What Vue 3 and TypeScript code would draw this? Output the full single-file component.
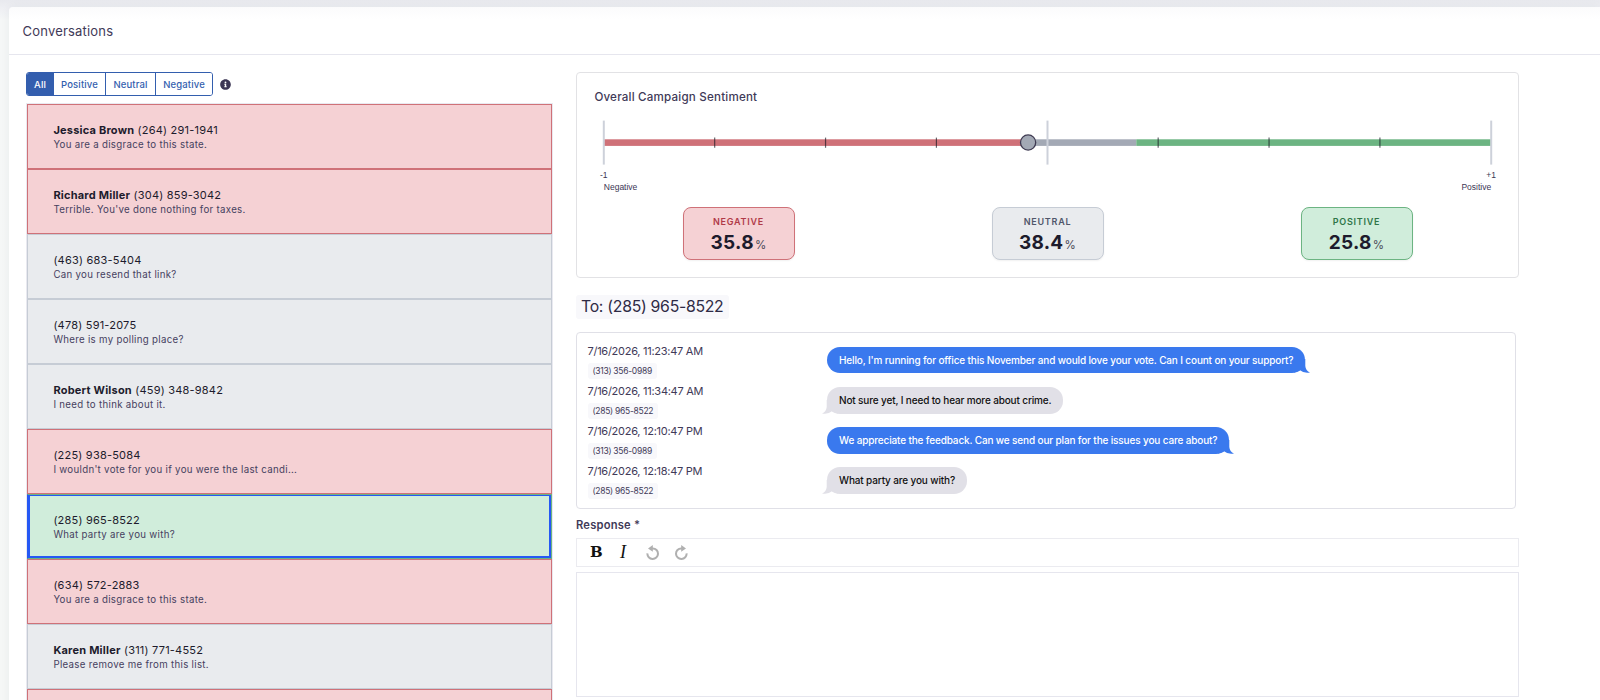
<script setup lang="ts">
type Tone = 'negative' | 'neutral' | 'positive'

interface Conversation {
  name?: string
  phone: string
  preview: string
  tone: Tone
  selected?: boolean
}

interface Message {
  time: string
  from: string
  text: string
  outgoing: boolean
}

const filters = ['All', 'Positive', 'Neutral', 'Negative']

const conversations: Conversation[] = [
  { name: 'Jessica Brown', phone: '(264) 291-1941', preview: 'You are a disgrace to this state.', tone: 'negative' },
  { name: 'Richard Miller', phone: '(304) 859-3042', preview: "Terrible. You've done nothing for taxes.", tone: 'negative' },
  { phone: '(463) 683-5404', preview: 'Can you resend that link?', tone: 'neutral' },
  { phone: '(478) 591-2075', preview: 'Where is my polling place?', tone: 'neutral' },
  { name: 'Robert Wilson', phone: '(459) 348-9842', preview: 'I need to think about it.', tone: 'neutral' },
  { phone: '(225) 938-5084', preview: "I wouldn't vote for you if you were the last candi...", tone: 'negative' },
  { phone: '(285) 965-8522', preview: 'What party are you with?', tone: 'positive', selected: true },
  { phone: '(634) 572-2883', preview: 'You are a disgrace to this state.', tone: 'negative' },
  { name: 'Karen Miller', phone: '(311) 771-4552', preview: 'Please remove me from this list.', tone: 'neutral' },
  { phone: '', preview: '', tone: 'negative' },
]

const scores: { tone: Tone; value: string }[] = [
  { tone: 'negative', value: '35.8' },
  { tone: 'neutral', value: '38.4' },
  { tone: 'positive', value: '25.8' },
]

const messages: Message[] = [
  { time: '7/16/2026, 11:23:47 AM', from: '(313) 356-0989', text: "Hello, I'm running for office this November and would love your vote. Can I count on your support?", outgoing: true },
  { time: '7/16/2026, 11:34:47 AM', from: '(285) 965-8522', text: 'Not sure yet, I need to hear more about crime.', outgoing: false },
  { time: '7/16/2026, 12:10:47 PM', from: '(313) 356-0989', text: 'We appreciate the feedback. Can we send our plan for the issues you care about?', outgoing: true },
  { time: '7/16/2026, 12:18:47 PM', from: '(285) 965-8522', text: 'What party are you with?', outgoing: false },
]

const minorTicks = [1, 2, 3, 5, 6, 7].map((i) => 9.8 + (i * 887) / 8)
</script>

<template>
  <div class="page">
    <section class="card">
      <header class="card-header">Conversations</header>
      <div class="columns">
        <aside class="sidebar">
          <div class="filter-bar">
            <div class="filters">
              <button v-for="(f, i) in filters" :key="f" type="button" :class="['filter', { active: i === 0 }]">{{ f }}</button>
            </div>
            <svg class="info" width="11" height="11" viewBox="0 0 512 512">
              <path fill="#3b3654" d="M256 8C119 8 8 119 8 256s111 248 248 248 248-111 248-248S393 8 256 8zm0 110a42 42 0 1 1 0 84 42 42 0 0 1 0-84zm56 254c0 7-5 12-12 12h-88c-7 0-12-5-12-12v-24c0-7 5-12 12-12h12v-64h-12c-7 0-12-5-12-12v-24c0-7 5-12 12-12h64c7 0 12 5 12 12v100h12c7 0 12 5 12 12z" />
            </svg>
          </div>
          <div class="list">
            <div v-for="(c, i) in conversations" :key="i" :class="['row', c.tone, { selected: c.selected }]">
              <div class="who"><strong v-if="c.name">{{ c.name }}</strong>{{ c.name ? ' ' : '' }}{{ c.phone }}</div>
              <div class="preview">{{ c.preview }}</div>
            </div>
          </div>
        </aside>

        <main class="detail">
          <div class="sentiment">
            <h2>Overall Campaign Sentiment</h2>
            <svg class="scale" width="907" height="80" viewBox="0 0 907 80">
              <rect x="9.8" y="25.3" width="424" height="6.6" fill="#cf7178" />
              <rect x="433.8" y="25.3" width="108.5" height="6.6" fill="#a3a9b5" />
              <rect x="542.3" y="25.3" width="354.5" height="6.6" fill="#6cb482" />
              <line v-for="x in minorTicks" :key="x" :x1="x" :x2="x" y1="23.6" y2="33.8" class="tick" />
              <g stroke="#cdd1da" stroke-width="2">
                <line x1="9.8" x2="9.8" y1="6.6" y2="50.6" />
                <line x1="453.5" x2="453.5" y1="6.6" y2="50.6" />
                <line x1="897.2" x2="897.2" y1="6.6" y2="50.6" />
              </g>
              <circle cx="434.1" cy="28.5" r="7.6" fill="#a3a9b5" stroke="#3f3b52" stroke-width="1.3" />
              <g class="scale-text">
                <text x="9.8" y="64" text-anchor="middle">-1</text>
                <text x="9.8" y="76">Negative</text>
                <text x="897.2" y="64" text-anchor="middle">+1</text>
                <text x="897.2" y="76" text-anchor="end">Positive</text>
              </g>
            </svg>
            <div class="scores">
              <div v-for="s in scores" :key="s.tone" class="score-cell">
                <div :class="['score', s.tone]">
                  <div class="score-label">{{ s.tone.toUpperCase() }}</div>
                  <div class="score-value">{{ s.value }}<span>%</span></div>
                </div>
              </div>
            </div>
          </div>

          <div class="recipient">To: (285) 965-8522</div>

          <div class="thread">
            <div v-for="m in messages" :key="m.time" class="message">
              <div class="meta">
                <div class="time">{{ m.time }}</div>
                <div class="from">{{ m.from }}</div>
              </div>
              <div :class="['bubble', m.outgoing ? 'out' : 'in']">
                {{ m.text }}
                <svg class="tail" width="16" height="14" viewBox="0 0 16 14">
                  <path d="M0 0H11.3V7Q11.7 11.8 16 13.4Q9.5 14.4 6 11.2Q4 12.6 0 13.5Z" />
                </svg>
              </div>
            </div>
          </div>

          <div class="response-label">Response *</div>
          <div class="toolbar">
            <span class="tool bold">B</span>
            <span class="tool italic">I</span>
            <svg class="tool-icon" width="14" height="15" viewBox="0 0 14 15">
              <path d="M1.4 8.4A5.3 5.3 0 1 0 6.8 3.4H5.5" fill="none" stroke="#b0b0b0" stroke-width="2" />
              <path d="M2 3.4L6.8 0V6.8Z" fill="#b0b0b0" />
            </svg>
            <svg class="tool-icon" width="14" height="15" viewBox="0 0 14 15">
              <path d="M12.6 8.4A5.3 5.3 0 1 1 7.2 3.4H8.5" fill="none" stroke="#b0b0b0" stroke-width="2" />
              <path d="M12 3.4L7.2 0V6.8Z" fill="#b0b0b0" />
            </svg>
          </div>
          <div class="editor"></div>
        </main>
      </div>
    </section>
  </div>
</template>

<style>
body {
  margin: 0;
  overflow: hidden;
}
</style>

<style scoped>
* {
  box-sizing: border-box;
}
.page {
  height: 700px;
  overflow: hidden;
  padding: 7px 0 0 9px;
  background: linear-gradient(#e8e9ee 0, #eeeff3 8px, #f5f7f7 20px, #f5f7f6 100%);
  font-family: Inter, 'Liberation Sans', sans-serif;
  color: #3f3a58;
}
.card {
  height: 720px;
  background: linear-gradient(#fbfbfc 0, #fff 12px);
  border-top-left-radius: 4px;
  box-shadow: 0 0 10px rgba(40, 45, 70, 0.06);
}
.card-header {
  height: 48px;
  padding-left: 13.5px;
  border-bottom: 1px solid #e6e6ee;
  font-size: 13px;
  line-height: 48px;
  letter-spacing: 0.2px;
}
.columns {
  display: flex;
  padding: 17px 0 0 17px;
}
.sidebar {
  width: 527px;
  margin-right: 23px;
}
.filter-bar {
  display: flex;
  align-items: center;
  height: 24px;
  margin-bottom: 7px;
}
.filters {
  display: flex;
  width: 187px;
  height: 24px;
  border: 1px solid #335eae;
  border-radius: 3px;
  overflow: hidden;
}
.filter {
  flex: 0 0 auto;
  padding: 1px 0 0;
  border: 0;
  border-right: 1px solid #335eae;
  background: #fff;
  color: #335eae;
  font: 500 9.5px/22px Inter, sans-serif;
  letter-spacing: 0.15px;
}
.filter:nth-child(1) { width: 27px; }
.filter:nth-child(2) { width: 52px; }
.filter:nth-child(3) { width: 50px; }
.filter:nth-child(4) { width: 56px; border-right: 0; }
.filter.active {
  background: #335eae;
  color: #fff;
}
.info {
  margin-left: 7px;
}
.list {
  border: 1px solid #e9e9f0;
}
.row {
  height: 65px;
  padding: 17px 0 0 25.4px;
  border: 1px solid;
  white-space: nowrap;
}
.negative {
  background: #f5d1d4;
  border-color: #cf7178;
}
.neutral {
  background: #e9ebee;
  border-color: #c6ccd5;
}
.positive {
  background: #d0eddb;
  border-color: #6cb482;
}
.row.selected {
  border-left-color: #2558f4;
  box-shadow: inset 2px 0 #2558f4, inset -2px 0 #2558f4, inset 0 1px #2558f4, inset 0 -2px #2558f4;
}
.who {
  height: 16px;
  font-size: 11px;
  line-height: 17px;
  letter-spacing: 0.21px;
  color: #1d1b2c;
}
.who strong {
  font-weight: 700;
}
.preview {
  font-size: 9.7px;
  line-height: 13px;
  letter-spacing: 0.3px;
  color: #46415f;
}
.detail {
  width: 943px;
}
.sentiment {
  height: 206px;
  border: 1px solid #e2e2e5;
  border-radius: 4px;
}
h2 {
  height: 41px;
  margin: 0;
  padding: 16px 0 0 17.4px;
  font-size: 11.6px;
  font-weight: 500;
  line-height: 16px;
  letter-spacing: 0.2px;
}
.scale {
  display: block;
  margin-left: 17px;
}
.tick {
  stroke: rgba(20, 20, 30, 0.65);
  stroke-width: 1.2;
}
.scale-text {
  font-family: 'Liberation Sans', Arial, sans-serif;
  font-size: 8.5px;
  fill: #3b3654;
}
.scores {
  display: flex;
  padding: 13px 7px 0;
}
.score-cell {
  flex: 1;
  display: flex;
  justify-content: center;
}
.score {
  width: 112px;
  height: 53px;
  padding-top: 8px;
  border-width: 1px;
  border-style: solid;
  border-radius: 8px;
  box-shadow: 0 1px 2px rgba(0, 0, 0, 0.06);
  text-align: center;
}
.score-label {
  font-size: 9px;
  font-weight: 600;
  line-height: 12px;
  letter-spacing: 0.75px;
}
.negative .score-label { color: #b03a48; }
.neutral .score-label { color: #50566a; }
.positive .score-label { color: #2f7548; }
.score-value {
  font-size: 19px;
  font-weight: 700;
  line-height: 30px;
  letter-spacing: 0.3px;
  color: #1d1b2c;
}
.score-value span {
  margin-left: 1px;
  font-size: 11.5px;
  font-weight: 400;
  color: #4b4a58;
}
.recipient {
  width: 153px;
  height: 24px;
  margin-top: 17px;
  padding-left: 5px;
  border-radius: 3px;
  background: #f8f8fb;
  font-size: 15.8px;
  line-height: 23px;
  letter-spacing: -0.28px;
  white-space: nowrap;
  color: #2f2b45;
}
.thread {
  width: 940px;
  height: 177px;
  margin-top: 13px;
  padding: 11px 0 0 10.5px;
  border: 1px solid #e0e0e7;
  border-radius: 4px;
}
.message {
  display: flex;
  height: 40px;
}
.meta {
  width: 239.5px;
}
.time {
  height: 19px;
  font-size: 11px;
  line-height: 15px;
  letter-spacing: -0.27px;
}
.from {
  width: max-content;
  height: 16px;
  padding: 0 5px;
  border-radius: 3px;
  background: #f8f8fb;
  font-size: 8.5px;
  line-height: 17px;
  letter-spacing: -0.28px;
}
.bubble {
  position: relative;
  height: 27px;
  margin-top: 3px;
  padding: 0 12px;
  border-radius: 13px;
  font-size: 10px;
  font-weight: 500;
  line-height: 26px;
  letter-spacing: -0.145px;
  white-space: nowrap;
}
.message:first-child .bubble {
  height: 26px;
}
.out {
  background: #3a79ee;
  color: #fff;
}
.in {
  background: #e1e0e7;
  color: #111;
}
.tail {
  position: absolute;
  right: -5px;
  bottom: 0;
}
.out .tail { fill: #3a79ee; }
.in .tail {
  right: auto;
  left: -5px;
  fill: #e1e0e7;
  transform: scaleX(-1);
}
.response-label {
  height: 29px;
  padding-top: 8px;
  font-size: 11.2px;
  font-weight: 600;
  line-height: 16px;
  letter-spacing: 0.2px;
}
.toolbar {
  display: flex;
  align-items: center;
  height: 29px;
  padding-left: 13px;
  border: 1px solid #ebebf0;
}
.tool {
  width: 28px;
  font-family: 'DejaVu Serif', serif;
  font-size: 15px;
  line-height: 27px;
  color: #111;
}
.bold { font-weight: 700; }
.italic {
  font-family: 'Liberation Serif', serif;
  font-size: 18px;
  font-style: italic;
  padding-left: 2px;
}
.tool-icon {
  margin-right: 14px;
}
.editor {
  height: 125px;
  margin-top: 5px;
  border: 1px solid #e6e6ee;
}
</style>
